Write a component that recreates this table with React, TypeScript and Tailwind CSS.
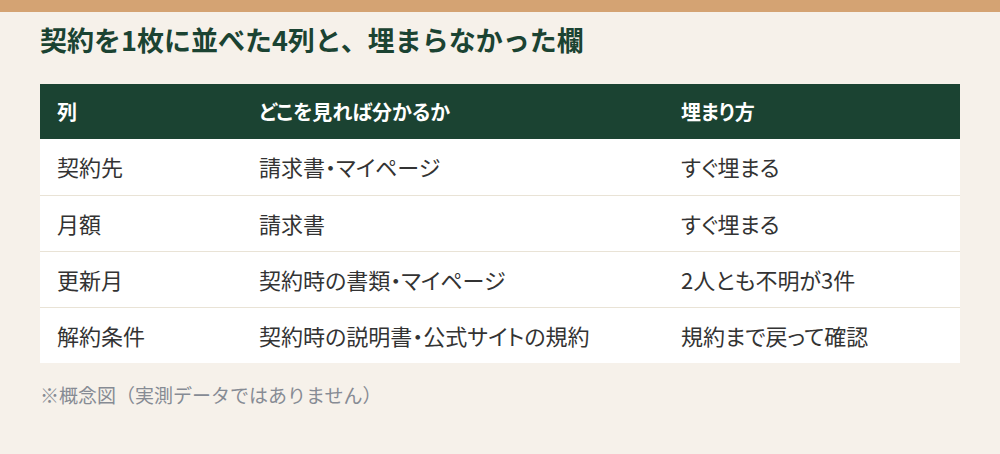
import React from "react";

const rows = [
  ["契約先", "請求書・マイページ", "すぐ埋まる"],
  ["月額", "請求書", "すぐ埋まる"],
  ["更新月", "契約時の書類・マイページ", "2人とも不明が3件"],
  ["解約条件", "契約時の説明書・公式サイトの規約", "規約まで戻って確認"],
];

export default function App() {
  return (
    <div
      className="w-[1000px] h-[454px] bg-[#f6f1ea] overflow-hidden"
      style={{ fontFamily: '"Noto Sans CJK JP", "Noto Sans", sans-serif' }}
    >
      <div className="h-[12px] bg-[#d4a373]" />
      <div className="px-[40px]">
        <h1 className="mt-[8px] h-[40px] text-[27px] leading-[40px] font-bold text-[#1b4332]">
          契約を1枚に並べた4列と、埋まらなかった欄
        </h1>
        <table className="mt-[24px] w-[920px] table-fixed border-collapse bg-white [font-feature-settings:'palt']">
          <colgroup>
            <col className="w-[202px]" />
            <col className="w-[422px]" />
            <col />
          </colgroup>
          <thead>
            <tr className="bg-[#1b4332] text-white">
              <th className="h-[55px] pl-[17px] text-left text-[20px] font-bold">列</th>
              <th className="h-[55px] pl-[17px] text-left text-[20px] font-bold">どこを見れば分かるか</th>
              <th className="h-[55px] pl-[17px] text-left text-[20px] font-bold">埋まり方</th>
            </tr>
          </thead>
          <tbody>
            {rows.map((r, i) => (
              <tr key={i} className={i < rows.length - 1 ? "border-b border-[#e9e3d6]" : ""}>
                {r.map((c, j) => (
                  <td key={j} className="h-[56px] pl-[17px] text-[22px] text-[#333333]">
                    {c}
                  </td>
                ))}
              </tr>
            ))}
          </tbody>
        </table>
        <p className="mt-[18px] text-[19px] leading-[28px] text-[#868b94]">
          ※概念図（実測データではありません）
        </p>
      </div>
    </div>
  );
}
